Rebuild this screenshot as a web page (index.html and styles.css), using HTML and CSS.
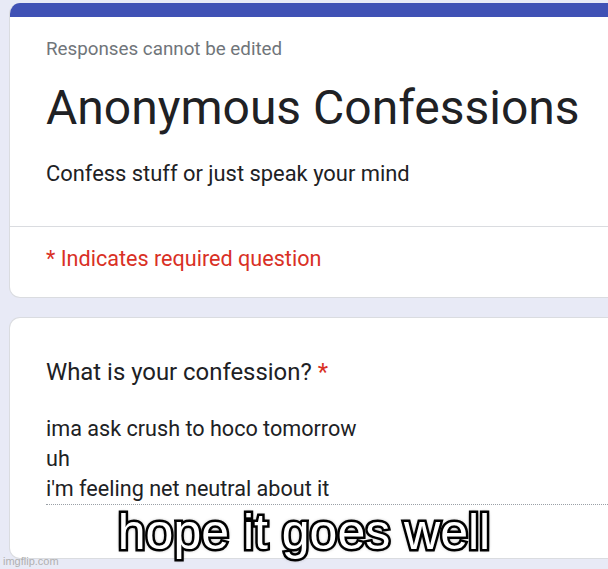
FILE: index.html
```html
<!DOCTYPE html>
<html>
<head>
<meta charset="utf-8">
<link rel="stylesheet" href="styles.css">
</head>
<body>
<div class="page">
  <div class="card head-card">
    <div class="bar"></div>
    <div class="head-main">
      <div class="note">Responses cannot be edited</div>
      <div class="title">Anonymous Confessions</div>
      <div class="desc">Confess stuff or just speak your mind</div>
    </div>
    <div class="head-req">* Indicates required question</div>
  </div>
  <div class="card q-card">
    <div class="question">What is your confession? <span class="star">*</span></div>
    <div class="answer">
      <div class="line">ima ask crush to hoco tomorrow</div>
      <div class="line">uh</div>
      <div class="line">i'm feeling net neutral about it</div>
    </div>
  </div>
</div>
<div class="meme">hope it goes well</div>
<div class="watermark">imgflip.com</div>
</body>
</html>
```
FILE: styles.css
```css
html, body {
  margin: 0;
  padding: 0;
  background: #e8eaf6;
  overflow: hidden;
  width: 608px;
  height: 569px;
  position: relative;
  font-family: Roboto, "Liberation Sans", sans-serif;
  color: #202124;
}
.page {
  padding: 3px 0 0 9px;
  display: flex;
  flex-direction: column;
  gap: 19px;
}
.card {
  width: 599px;
  background: #fff;
  border: 1px solid #dadce0;
  border-right: none;
  border-radius: 11px 0 0 11px;
  box-sizing: border-box;
  overflow: hidden;
}
.head-card {
  border-top: none;
}
.bar {
  height: 14px;
  background: #3f51b5;
}
.head-main {
  padding: 20px 0 38px 36px;
  border-bottom: 1px solid #dadce0;
}
.note {
  font-size: 18.8px;
  line-height: 24px;
  color: #70757a;
}
.title {
  font-size: 48px;
  line-height: 56px;
  margin-top: 19px;
  color: #202124;
  white-space: nowrap;
}
.desc {
  font-size: 21.9px;
  line-height: 28px;
  margin-top: 24px;
  color: #202124;
}
.head-req {
  padding: 18px 0 24px 36px;
  font-size: 21.6px;
  line-height: 28px;
  color: #d93025;
}
.q-card {
  padding: 38px 0 53px 36px;
}
.question {
  font-size: 23.9px;
  line-height: 32px;
  color: #202124;
}
.star {
  color: #d93025;
}
.answer {
  margin-top: 26px;
  border-bottom: 1px dotted #9aa0a6;
}
.line {
  font-size: 21.6px;
  line-height: 30px;
  color: #202124;
}
.meme {
  position: absolute;
  left: 0;
  right: 0;
  top: 505px;
  text-align: center;
  font-family: "Liberation Sans", Arial, sans-serif;
  font-size: 50px;
  line-height: 54px;
  color: #fff;
  -webkit-text-stroke: 5px #000;
  paint-order: stroke fill;
  text-shadow: 0 0 4px #000, 0 0 3px #000, 0 0 2px #000;
}
.watermark {
  position: absolute;
  left: 3px;
  top: 555px;
  font-family: "Liberation Sans", Arial, sans-serif;
  font-size: 11px;
  line-height: 13px;
  color: #b0b0b0;
}
```
